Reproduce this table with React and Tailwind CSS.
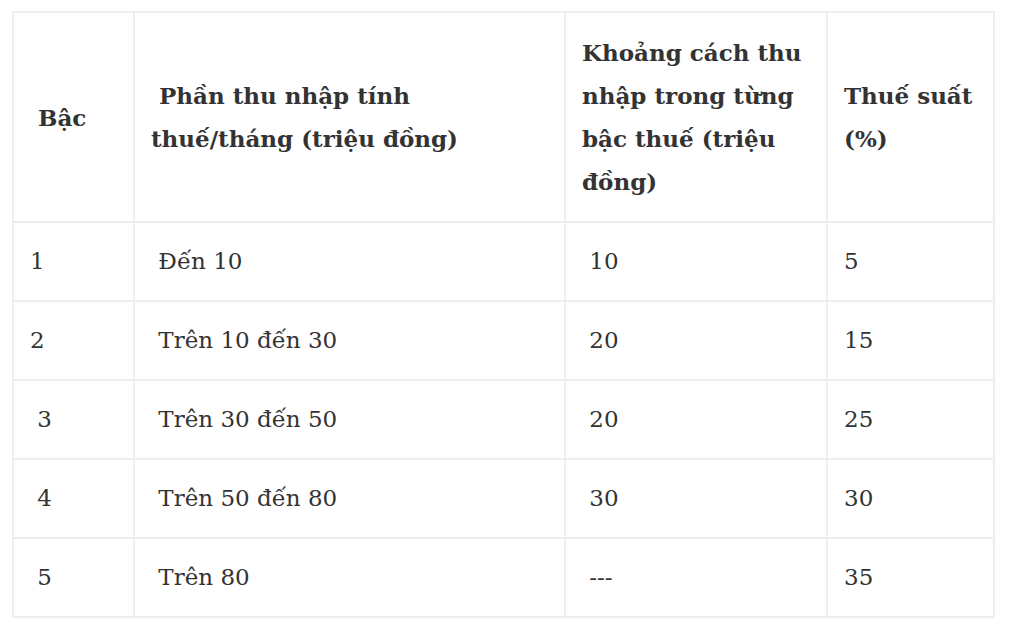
import * as React from "react"

const rows = [
  ["1", " Đến 10", " 10", "5"],
  ["2", " Trên 10 đến 30", " 20", "15"],
  [" 3", " Trên 30 đến 50", " 20", "25"],
  [" 4", " Trên 50 đến 80", " 30", "30"],
  [" 5", " Trên 80", " ---", "35"],
];

const cell = "border-2 border-[#eeeeee] px-[16px] align-middle whitespace-pre-wrap";

export default function App() {
  return (
    <div className="w-[1020px] h-[631px] bg-white pt-[11px] pl-[12px]" style={{ fontFamily: '"DejaVu Serif", serif' }}>
      <table className="border-collapse table-fixed w-[981px] text-[23px] leading-[43px] text-[#333333]">
        <colgroup>
          <col className="w-[121px]" />
          <col className="w-[431px]" />
          <col className="w-[262px]" />
          <col className="w-[167px]" />
        </colgroup>
        <thead>
          <tr>
            <th className={cell + " py-[18px] text-left font-bold"}> Bậc</th>
            <th className={cell + " py-[18px] text-left font-bold"}> Phần thu nhập tính<br />thuế/tháng (triệu đồng)</th>
            <th className={cell + " py-[18px] text-left font-bold"}>Khoảng cách thu nhập trong từng bậc thuế (triệu đồng)</th>
            <th className={cell + " py-[18px] text-left font-bold"}>Thuế suất (%)</th>
          </tr>
        </thead>
        <tbody>
          {rows.map((r, i) => (
            <tr key={i}>
              {r.map((c, j) => (
                <td key={j} className={cell + " py-[17px]"}>{c}</td>
              ))}
            </tr>
          ))}
        </tbody>
      </table>
    </div>
  )
}
